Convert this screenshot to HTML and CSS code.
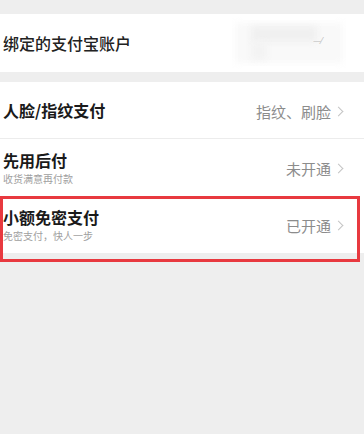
FILE: index.html
```html
<!DOCTYPE html>
<html lang="zh-CN">
<head>
<meta charset="utf-8">
<title>支付设置</title>
<link rel="stylesheet" href="styles.css">
</head>
<body>
<div class="page">
  <div class="group first">
    <div class="row row-account">
      <div class="main"><div class="title normal">绑定的支付宝账户</div></div>
      <div class="redact">
        <span class="blur b1"></span>
        <span class="blur b2"></span>
        <span class="blur b3"></span>
        <span class="mark">— ⁄</span>
      </div>
    </div>
  </div>
  <div class="group">
    <div class="row divided">
      <div class="main"><div class="title">人脸/指纹支付</div></div>
      <div class="side"><span class="value">指纹、刷脸</span><span class="chev"></span></div>
    </div>
    <div class="row">
      <div class="main"><div class="title">先用后付</div><div class="sub">收货满意再付款</div></div>
      <div class="side"><span class="value">未开通</span><span class="chev"></span></div>
    </div>
    <div class="row">
      <div class="main"><div class="title">小额免密支付</div><div class="sub">免密支付，快人一步</div></div>
      <div class="side"><span class="value">已开通</span><span class="chev"></span></div>
    </div>
  </div>
  <div class="highlight"></div>
</div>
</body>
</html>
```

FILE: styles.css
```css
* { box-sizing: border-box; }
html, body { margin: 0; padding: 0; }
body {
  background: #eeeeee;
  font-family: "Noto Sans CJK SC", "Noto Sans", sans-serif;
  width: 364px;
  height: 434px;
  overflow: hidden;
}
.page {
  position: relative;
  padding-top: 14px;
  display: flex;
  flex-direction: column;
  gap: 10px;
}
.group {
  background: #ffffff;
  display: flex;
  flex-direction: column;
}
.row {
  display: flex;
  align-items: center;
  justify-content: space-between;
  height: 57px;
  padding: 0 20px 0 3px;
  position: relative;
}
.row-account { height: 58px; }
.row.divided { border-bottom: 1px solid #ececec; height: 57px; }
.main {
  display: flex;
  flex-direction: column;
  justify-content: center;
}
.title {
  font-size: 16px;
  line-height: 20px;
  font-weight: 700;
  color: #1a1a1a;
}
.title.normal { font-weight: 500; color: #222; }
.sub {
  font-size: 10px;
  line-height: 13px;
  color: #a0a0a0;
  margin-top: 2px;
}
.side {
  display: flex;
  align-items: center;
  gap: 4px;
  margin-top: 2px;
}
.value {
  font-size: 15px;
  color: #8c8c8c;
}
.chev {
  width: 7px;
  height: 7px;
  border-top: 1.3px solid #c4c4c4;
  border-right: 1.3px solid #c4c4c4;
  transform: rotate(45deg);
  margin-right: 2px;
}
.redact {
  position: relative;
  width: 110px;
  height: 40px;
  margin-right: -1px;
}
.blur {
  position: absolute;
  display: block;
  filter: blur(3px);
}
.b1 { left: 0; top: 0; width: 108px; height: 40px; background: #f9f9f9; }
.b2 { left: 16px; top: 3px; width: 66px; height: 16px; background: #f0f0f0; }
.b3 { left: 16px; top: 19px; width: 16px; height: 18px; background: #f3f3f3; }
.mark {
  position: absolute;
  left: 78px;
  top: 11px;
  font-size: 9px;
  color: #bdbdbd;
  letter-spacing: -1px;
}
.highlight {
  position: absolute;
  left: 0;
  top: 196px;
  width: 360px;
  height: 66px;
  border: 3px solid #e8393f;
  pointer-events: none;
}
```
